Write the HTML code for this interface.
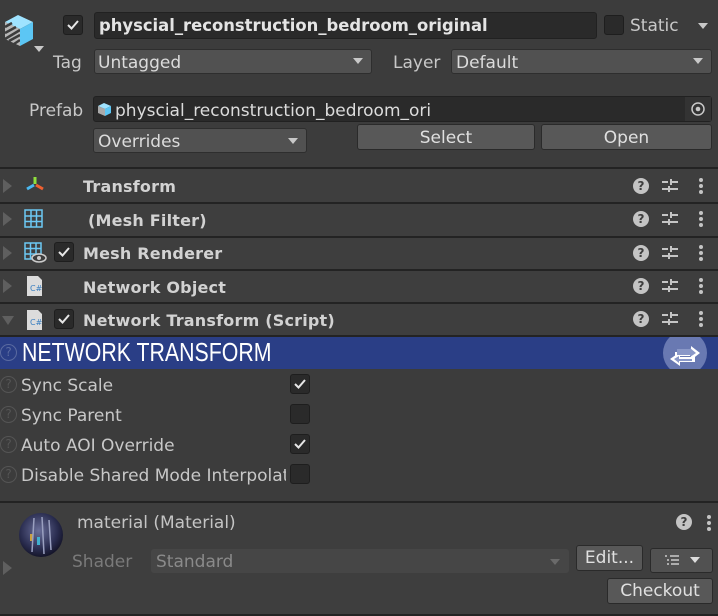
<!DOCTYPE html>
<html><head><meta charset="utf-8"><style>
*{box-sizing:border-box;margin:0;padding:0}
body{width:718px;height:616px;background:#3c3c3c;font-family:"DejaVu Sans","Liberation Sans",sans-serif;color:#c8c8c8;font-size:17px;position:relative;overflow:hidden}
.a{position:absolute;white-space:nowrap}
.fld{position:absolute;background:#2a2a2a;border:1px solid #212121;border-radius:3px}
.dd{position:absolute;background:#515151;border:1px solid #2e2e2e;border-radius:3px}
.btn{position:absolute;background:#585858;border:1px solid #2a2a2a;border-radius:3px;text-align:center;color:#e0e0e0}
.cb{position:absolute;width:20px;height:20px;background:#2a2a2a;border:1px solid #1e1e1e;border-radius:3px}
.tri{position:absolute;width:0;height:0;border-left:6px solid transparent;border-right:6px solid transparent;border-top:7px solid #c8c8c8}
.rtri{position:absolute;width:0;height:0;border-top:7px solid transparent;border-bottom:7px solid transparent;border-left:9px solid #5f5f5f}
.sep{position:absolute;left:0;width:718px;height:2px;background:#232323}
.row{position:absolute;left:0;width:718px;height:32px;background:#3e3e3e}
.bold{font-weight:bold;color:#d2d2d2;font-size:16px;letter-spacing:0.2px}
.q{position:absolute;width:16px;height:16px;border-radius:50%;background:#c4c4c4;color:#3e3e3e;font-size:12px;font-weight:bold;text-align:center;line-height:16px}
.q2{position:absolute;width:17px;height:17px;border-radius:50%;border:1px solid #555;color:#555;font-size:12px;text-align:center;line-height:15px}
</style></head><body>
<svg class="a" style="left:2px;top:12px" width="44" height="44" viewBox="0 0 44 44">
<polygon points="3,10 16,3 31,10 18,17" fill="#9fe3ff"/>
<polygon points="3,10 18,17 18,34 3,27" fill="#b8b8b8"/>
<path d="M3,15 L10,11 M3,21 L14,15 M3,27 L18,18 M7,29 L18,23 M12,32 L18,28" stroke="#3c3c3c" stroke-width="2.5"/>
<polygon points="18,17 31,10 31,27 18,34" fill="#5cc6f4"/>
<polygon points="32,34 42,34 37,40" fill="#c8c8c8"/>
</svg>
<div class="cb" style="left:63px;top:15px"></div>
<svg class="a" style="left:66px;top:18px" width="14" height="14"><path d="M2,7 L5.5,10.5 L12,3" stroke="#e6e6e6" stroke-width="2" fill="none"/></svg>
<div class="fld" style="left:94px;top:12px;width:503px;height:27px"></div>
<div class="a bold" style="left:99px;top:16px;font-size:16.4px;letter-spacing:0;color:#e4e4e4">physcial_reconstruction_bedroom_original</div>
<div class="cb" style="left:604px;top:15px"></div>
<div class="a" style="left:630px;top:16px">Static</div>
<div class="tri" style="left:698px;top:23px;border-width:6px 5px 0 5px;border-top-color:#c8c8c8"></div>

<div class="a" style="left:53px;top:53px">Tag</div>
<div class="dd" style="left:94px;top:49px;width:278px;height:25px"></div>
<div class="a" style="left:98px;top:53px;color:#dcdcdc">Untagged</div>
<div class="tri" style="left:353px;top:58px;border-width:6px 5px 0 5px"></div>
<div class="a" style="left:393px;top:53px">Layer</div>
<div class="dd" style="left:451px;top:49px;width:261px;height:25px"></div>
<div class="a" style="left:456px;top:53px;color:#dcdcdc">Default</div>
<div class="tri" style="left:693px;top:58px;border-width:6px 5px 0 5px"></div>

<div class="a" style="left:29px;top:101px">Prefab</div>
<div class="fld" style="left:93px;top:96px;width:619px;height:26px"></div>
<div class="a" style="left:685px;top:97px;width:26px;height:24px;background:#333"></div>
<svg class="a" style="left:690px;top:101px" width="16" height="16"><circle cx="8" cy="8" r="6" stroke="#c8c8c8" stroke-width="1.5" fill="none"/><circle cx="8" cy="8" r="2.3" fill="#c8c8c8"/></svg>
<svg class="a" style="left:97px;top:102px" width="15" height="15" viewBox="0 0 15 15"><polygon points="1,4 7,1 14,4 8,7" fill="#9fe3ff"/><polygon points="1,4 8,7 8,14 1,11" fill="#aaa"/><polygon points="8,7 14,4 14,11 8,14" fill="#5cc6f4"/></svg>
<div class="a" style="left:115px;top:101px;color:#dcdcdc">physcial_reconstruction_bedroom_ori</div>

<div class="dd" style="left:93px;top:128px;width:214px;height:25px"></div>
<div class="a" style="left:98px;top:132px;color:#dcdcdc">Overrides</div>
<div class="tri" style="left:288px;top:138px;border-width:6px 5px 0 5px"></div>
<div class="btn" style="left:357px;top:124px;width:178px;height:26px;line-height:26px">Select</div>
<div class="btn" style="left:541px;top:124px;width:171px;height:26px;line-height:26px">Open</div>

<div class="sep" style="top:167px"></div>
<div class="row" style="top:169px;height:33px"></div>
<div class="sep" style="top:202px"></div>
<div class="row" style="top:204px;height:32px"></div>
<div class="sep" style="top:236px"></div>
<div class="row" style="top:238px;height:32px"></div>
<div class="sep" style="top:269px"></div>
<div class="row" style="top:271px;height:32px"></div>
<div class="sep" style="top:302px"></div>
<div class="row" style="top:304px;height:32px"></div>
<div class="sep" style="top:335px"></div>

<div class="rtri" style="left:3px;top:179px"></div>
<div class="rtri" style="left:3px;top:212px"></div>
<div class="rtri" style="left:3px;top:246px"></div>
<div class="rtri" style="left:3px;top:279px"></div>
<div class="tri" style="left:2px;top:316px;border-width:9px 6px 0 6px;border-top-color:#5f5f5f"></div>

<svg class="a" style="left:25px;top:176px" width="22" height="18"><path d="M10,1 V8" stroke="#8fe03c" stroke-width="3"/><path d="M9,9 L2,13" stroke="#4ab8f0" stroke-width="3"/><path d="M11,9 L18,13" stroke="#f06030" stroke-width="3"/></svg>
<svg class="a" style="left:24px;top:209px" width="20" height="20"><rect x="1" y="1" width="17" height="17" fill="none" stroke="#6cc8f4" stroke-width="1.5"/><path d="M7,1V18M12.5,1V18M1,7H18M1,12.5H18" stroke="#6cc8f4" stroke-width="1.5"/></svg>
<svg class="a" style="left:24px;top:242px" width="24" height="22"><rect x="1" y="1" width="16" height="16" fill="none" stroke="#6cc8f4" stroke-width="1.5"/><path d="M6.5,1V17M12,1V17M1,6.5H17M1,12H17" stroke="#6cc8f4" stroke-width="1.5"/><ellipse cx="15" cy="16" rx="7" ry="4" fill="#3e3e3e" stroke="#ccc" stroke-width="1.5"/><circle cx="15" cy="16" r="2" fill="#ccc"/></svg>
<svg class="a" style="left:26px;top:275px" width="18" height="22"><path d="M1,1H12L16,5V21H1Z" fill="#dcdcdc"/><text x="4" y="16" font-size="8" fill="#3a7fc0" font-family="DejaVu Sans">C#</text></svg>
<svg class="a" style="left:26px;top:309px" width="18" height="22"><path d="M1,1H12L16,5V21H1Z" fill="#dcdcdc"/><text x="4" y="16" font-size="8" fill="#3a7fc0" font-family="DejaVu Sans">C#</text></svg>

<div class="cb" style="left:54px;top:242px"></div>
<svg class="a" style="left:57px;top:245px" width="14" height="14"><path d="M2,7 L5.5,10.5 L12,3" stroke="#e6e6e6" stroke-width="2" fill="none"/></svg>
<div class="cb" style="left:54px;top:309px"></div>
<svg class="a" style="left:57px;top:312px" width="14" height="14"><path d="M2,7 L5.5,10.5 L12,3" stroke="#e6e6e6" stroke-width="2" fill="none"/></svg>

<div class="a bold" style="left:83px;top:177px">Transform</div>
<div class="a bold" style="left:88px;top:211px">(Mesh Filter)</div>
<div class="a bold" style="left:83px;top:244px">Mesh Renderer</div>
<div class="a bold" style="left:83px;top:278px">Network Object</div>
<div class="a bold" style="left:83px;top:311px">Network Transform (Script)</div>

<div class="q" style="left:633px;top:178px">?</div><div class="q" style="left:633px;top:211px">?</div><div class="q" style="left:633px;top:245px">?</div><div class="q" style="left:633px;top:278px">?</div><div class="q" style="left:633px;top:311px">?</div>
<svg class="a" style="left:661px;top:177px" width="18" height="18"><g stroke="#c4c4c4" stroke-width="2"><path d="M1,5H7M10,5H17M10,2V8M1,12H17M8,9V15"/></g></svg>
<svg class="a" style="left:661px;top:210px" width="18" height="18"><g stroke="#c4c4c4" stroke-width="2"><path d="M1,5H7M10,5H17M10,2V8M1,12H17M8,9V15"/></g></svg>
<svg class="a" style="left:661px;top:244px" width="18" height="18"><g stroke="#c4c4c4" stroke-width="2"><path d="M1,5H7M10,5H17M10,2V8M1,12H17M8,9V15"/></g></svg>
<svg class="a" style="left:661px;top:277px" width="18" height="18"><g stroke="#c4c4c4" stroke-width="2"><path d="M1,5H7M10,5H17M10,2V8M1,12H17M8,9V15"/></g></svg>
<svg class="a" style="left:661px;top:310px" width="18" height="18"><g stroke="#c4c4c4" stroke-width="2"><path d="M1,5H7M10,5H17M10,2V8M1,12H17M8,9V15"/></g></svg>
<svg class="a" style="left:697px;top:177px" width="8" height="160"><g fill="#c4c4c4">
<circle cx="4" cy="3" r="2"/><circle cx="4" cy="9" r="2"/><circle cx="4" cy="15" r="2"/>
<circle cx="4" cy="36" r="2"/><circle cx="4" cy="42" r="2"/><circle cx="4" cy="48" r="2"/>
<circle cx="4" cy="70" r="2"/><circle cx="4" cy="76" r="2"/><circle cx="4" cy="82" r="2"/>
<circle cx="4" cy="103" r="2"/><circle cx="4" cy="109" r="2"/><circle cx="4" cy="115" r="2"/>
<circle cx="4" cy="136" r="2"/><circle cx="4" cy="142" r="2"/><circle cx="4" cy="148" r="2"/></g></svg>

<div class="a" style="left:0;top:337px;width:718px;height:32px;background:#2a3e86"></div>
<div class="q2" style="left:0px;top:344px;border-color:#5a6aa0;color:#5a6aa0">?</div>
<div class="a" style="left:22px;top:337px;font-family:'Liberation Sans Narrow','Liberation Sans',sans-serif;font-size:26px;color:#fff;transform:scaleX(0.82);transform-origin:left">NETWORK TRANSFORM</div>
<svg class="a" style="left:660px;top:337px" width="50" height="32"><circle cx="25" cy="16" r="22" fill="#7f8dc0" opacity="0.75"/><path d="M12,16 L20,8 V12 H32 L38,16 H20 V20 Z" fill="none"/><path d="M15,15 H31 V9 L40,16 L31,23 V19 H15Z" fill="#fff"/><path d="M18,17 H33 L24,17" fill="none"/><path d="M35,20 H20 V15 L10,22 L20,29 V25 H35Z" fill="#fff"/><path d="M32,22 H19 V19 L14,22 L19,26 V24 H32Z" fill="#8a98c8"/><path d="M17,12 H30 V11 L36,16 L30,20 V18 H17Z" fill="#8a98c8"/></svg>

<div class="q2" style="left:0;top:376px">?</div><div class="a" style="left:21px;top:376px">Sync Scale</div>
<div class="q2" style="left:0;top:406px">?</div><div class="a" style="left:21px;top:406px">Sync Parent</div>
<div class="q2" style="left:0;top:436px">?</div><div class="a" style="left:21px;top:436px">Auto AOI Override</div>
<div class="q2" style="left:0;top:466px">?</div><div class="a" style="left:21px;top:466px;width:265px;overflow:hidden">Disable Shared Mode Interpolation</div>
<div class="cb" style="left:290px;top:374px"></div><svg class="a" style="left:293px;top:377px" width="14" height="14"><path d="M2,7 L5.5,10.5 L12,3" stroke="#e6e6e6" stroke-width="2" fill="none"/></svg>
<div class="cb" style="left:290px;top:404px"></div>
<div class="cb" style="left:290px;top:434px"></div><svg class="a" style="left:293px;top:437px" width="14" height="14"><path d="M2,7 L5.5,10.5 L12,3" stroke="#e6e6e6" stroke-width="2" fill="none"/></svg>
<div class="cb" style="left:290px;top:464px"></div>

<div class="sep" style="top:501px"></div>
<div class="a" style="left:0;top:503px;width:718px;height:111px;background:#3e3e3e"></div>
<div class="sep" style="top:614px"></div>
<svg class="a" style="left:18px;top:512px" width="46" height="46"><defs><radialGradient id="g" cx="0.45" cy="0.4" r="0.6"><stop offset="0" stop-color="#6a6f9a"/><stop offset="0.7" stop-color="#2a2d50"/><stop offset="1" stop-color="#15152a"/></radialGradient></defs><circle cx="23" cy="23" r="22" fill="url(#g)"/><rect x="12" y="22" width="3" height="7" fill="#c9a040"/><rect x="19" y="25" width="3" height="8" fill="#40b0d0"/><path d="M16,6 L14,40 M24,5 L26,42 M31,8 L33,38" stroke="#9aa0c0" stroke-width="1.5"/></svg>
<div class="rtri" style="left:3px;top:561px"></div>
<div class="a" style="left:77px;top:513px;color:#c4c4c4">material (Material)</div>
<div class="q" style="left:676px;top:514px">?</div>
<svg class="a" style="left:705px;top:514px" width="8" height="18"><g fill="#c4c4c4"><circle cx="4" cy="3" r="2"/><circle cx="4" cy="9" r="2"/><circle cx="4" cy="15" r="2"/></g></svg>
<div class="a" style="left:72px;top:552px;color:#7a7a7a">Shader</div>
<div class="a" style="left:151px;top:549px;width:418px;height:24px;background:#464646;border-radius:3px"></div>
<div class="a" style="left:156px;top:552px;color:#8a8a8a">Standard</div>
<div class="tri" style="left:550px;top:559px;border-width:6px 5px 0 5px;border-top-color:#6a6a6a"></div>
<div class="btn" style="left:576px;top:545px;width:67px;height:26px;line-height:25px">Edit...</div>
<div class="btn" style="left:650px;top:548px;width:63px;height:25px;background:#515151"></div>
<svg class="a" style="left:664px;top:553px" width="16" height="14"><g stroke="#ccc" stroke-width="1.5"><path d="M1,3H3M6,3H15M3,7H5M7,7H15M3,11H5M7,11H15"/></g></svg>
<div class="tri" style="left:690px;top:557px;border-width:6px 5px 0 5px;border-top-color:#ddd"></div>
<div class="btn" style="left:607px;top:578px;width:106px;height:26px;line-height:25px">Checkout</div>
</body></html>
